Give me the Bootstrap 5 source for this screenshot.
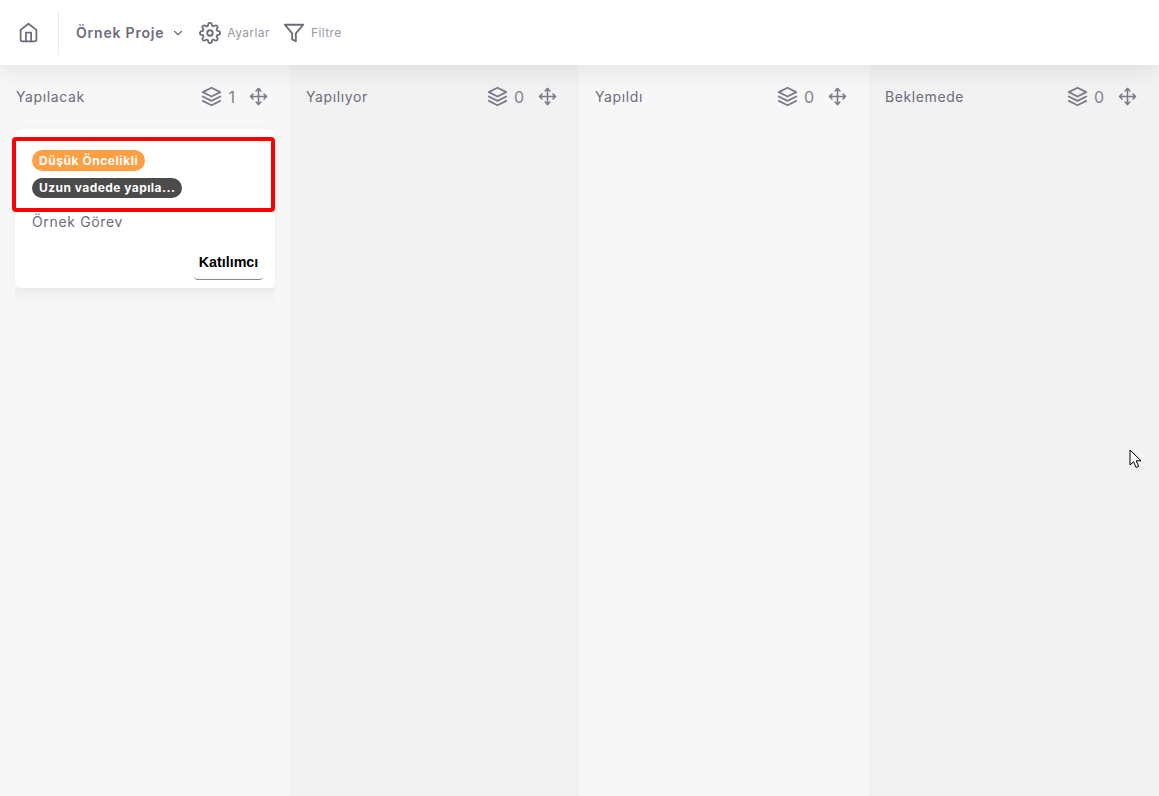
<!DOCTYPE html>
<html lang="tr">
<head>
    <meta charset="UTF-8">
    <title>Örnek Proje</title>
    <link href="https://cdn.jsdelivr.net/npm/bootstrap@5.3.0/dist/css/bootstrap.min.css" rel="stylesheet">
    <style>
        html, body {
            height: 100%;
        }

        body {
            font-family: Inter, "Noto Sans", sans-serif;
            color: #6e6b7b;
            background: #f8f8f8;
            overflow: hidden;
            position: relative;
        }

        .top-bar {
            height: 65px;
            background: #fff;
            box-shadow: 0 4px 24px rgba(34, 41, 47, 0.1);
            position: relative;
            z-index: 2;
            padding-left: 18px;
        }

        .home-link {
            width: 41px;
            height: 44px;
            border-right: 1px solid #ebe9f1;
            margin-right: 17px;
        }

        .project-name {
            font-size: 14px;
            font-weight: 600;
            letter-spacing: .8px;
            color: #6e6b7b;
        }

        .bar-link {
            font-size: 12px;
            color: #9a98a5;
            letter-spacing: .4px;
        }

        .chevron-ic {
            margin-left: 7px;
        }

        .gear-ic {
            margin-left: 14px;
        }

        .filter-ic {
            margin-left: 13px;
        }

        .ic-label {
            margin-left: 6px;
        }

        .board {
            display: grid;
            grid-template-columns: 290px 289px 290px 290px;
            height: 731px;
        }

        .board-col {
            background: #f7f7f7;
            padding: 0 15px;
        }

        .board-col.shaded {
            background: #f2f2f2;
        }

        .col-head {
            height: 64px;
            padding-left: 1px;
            padding-right: 7px;
            padding-bottom: 1px;
            font-size: 14px;
            letter-spacing: .6px;
        }

        .col-head svg {
            color: #7c7a87;
        }

        .col-count {
            margin: 0 14px 0 6px;
            font-size: 16px;
            color: #85828f;
            letter-spacing: 0;
        }

        .task-card {
            height: 159px;
            background: #fff;
            border-radius: 7px;
            box-shadow: 0 1px 10px rgba(34, 41, 47, 0.04);
            padding: 21px 12px 8px 17px;
            position: relative;
        }

        .task-card::after {
            content: "";
            position: absolute;
            left: 0;
            right: 0;
            top: 100%;
            height: 18px;
            background: linear-gradient(rgba(34, 41, 47, 0.04), rgba(34, 41, 47, 0));
        }

        .tag {
            display: table;
            font-size: 12px;
            font-weight: 700;
            line-height: 20px;
            color: #fff;
            border-radius: 10.5px;
            padding: 0 7px;
            letter-spacing: .45px;
            margin-bottom: 8px;
        }

        .tag-low {
            background: #ff9f43;
            line-height: 21px;
            letter-spacing: .55px;
            margin-bottom: 7px;
        }

        .tag-long {
            background: #4b4b4b;
        }

        .task-name {
            font-size: 14px;
            line-height: 20px;
            margin-top: 14px;
            letter-spacing: .65px;
        }

        .people-btn {
            width: 69px;
            height: 34px;
            margin-top: 14px;
            font-family: "Liberation Sans", Arial, sans-serif;
            font-size: 14.3px;
            font-weight: 700;
            color: #000;
            text-align: center;
            line-height: 32px;
            border-bottom: 1px solid #8a8a8a;
            border-radius: 0 0 4px 4px;
        }

        .red-mark {
            position: absolute;
            left: 12px;
            top: 137px;
            width: 263px;
            height: 75px;
            border: 4px solid #f00;
            border-radius: 4px;
            z-index: 3;
        }

        .mouse-arrow {
            position: absolute;
            left: 1129px;
            top: 449px;
            z-index: 3;
        }
    </style>
</head>
<body>
    <svg width="0" height="0" class="position-absolute">
        <symbol id="ic-layers" viewBox="0 0 24 24" fill="none" stroke="currentColor" stroke-width="2" stroke-linecap="round" stroke-linejoin="round">
            <polygon points="12 2 2 7 12 12 22 7 12 2"></polygon>
            <polyline points="2 17 12 22 22 17"></polyline>
            <polyline points="2 12 12 17 22 12"></polyline>
        </symbol>
        <symbol id="ic-move" viewBox="0 0 24 24" fill="none" stroke="currentColor" stroke-width="2" stroke-linecap="round" stroke-linejoin="round">
            <polyline points="5 9 2 12 5 15"></polyline>
            <polyline points="9 5 12 2 15 5"></polyline>
            <polyline points="15 19 12 22 9 19"></polyline>
            <polyline points="19 9 22 12 19 15"></polyline>
            <line x1="2" y1="12" x2="22" y2="12"></line>
            <line x1="12" y1="2" x2="12" y2="22"></line>
        </symbol>
    </svg>

    <nav class="top-bar d-flex align-items-center">
        <div class="home-link d-flex align-items-center">
            <svg width="21" height="21" viewBox="0 0 24 24" fill="none" stroke="#6e6b7b" stroke-width="2" stroke-linecap="round" stroke-linejoin="round">
                <path d="M3 9l9-7 9 7v11a2 2 0 0 1-2 2H5a2 2 0 0 1-2-2z"></path>
                <polyline points="9 22 9 12 15 12 15 22"></polyline>
            </svg>
        </div>
        <span class="project-name">Örnek Proje</span>
        <svg class="chevron-ic" width="14" height="14" viewBox="0 0 24 24" fill="none" stroke="#6e6b7b" stroke-width="2" stroke-linecap="round" stroke-linejoin="round">
            <polyline points="6 9 12 15 18 9"></polyline>
        </svg>
        <svg class="gear-ic" width="22" height="22" viewBox="0 0 24 24" fill="none" stroke="#6e6b7b" stroke-width="2" stroke-linecap="round" stroke-linejoin="round">
            <circle cx="12" cy="12" r="3"></circle>
            <path d="M19.4 15a1.65 1.65 0 0 0 .33 1.82l.06.06a2 2 0 0 1 0 2.83 2 2 0 0 1-2.83 0l-.06-.06a1.65 1.65 0 0 0-1.82-.33 1.65 1.65 0 0 0-1 1.51V21a2 2 0 0 1-2 2 2 2 0 0 1-2-2v-.09A1.65 1.65 0 0 0 9 19.4a1.65 1.65 0 0 0-1.82.33l-.06.06a2 2 0 0 1-2.83 0 2 2 0 0 1 0-2.83l.06-.06a1.65 1.65 0 0 0 .33-1.82 1.65 1.65 0 0 0-1.51-1H3a2 2 0 0 1-2-2 2 2 0 0 1 2-2h.09A1.65 1.65 0 0 0 4.6 9a1.65 1.65 0 0 0-.33-1.82l-.06-.06a2 2 0 0 1 0-2.83 2 2 0 0 1 2.83 0l.06.06a1.65 1.65 0 0 0 1.82.33H9a1.65 1.65 0 0 0 1-1.51V3a2 2 0 0 1 2-2 2 2 0 0 1 2 2v.09a1.65 1.65 0 0 0 1 1.51 1.65 1.65 0 0 0 1.82-.33l.06-.06a2 2 0 0 1 2.83 0 2 2 0 0 1 0 2.83l-.06.06a1.65 1.65 0 0 0-.33 1.82V9a1.65 1.65 0 0 0 1.51 1H21a2 2 0 0 1 2 2 2 2 0 0 1-2 2h-.09a1.65 1.65 0 0 0-1.51 1z"></path>
        </svg>
        <span class="bar-link ic-label">Ayarlar</span>
        <svg class="filter-ic" width="22" height="22" viewBox="0 0 24 24" fill="none" stroke="#6e6b7b" stroke-width="2" stroke-linecap="round" stroke-linejoin="round">
            <polygon points="22 3 2 3 10 12.46 10 19 14 21 14 12.46 22 3"></polygon>
        </svg>
        <span class="bar-link ic-label">Filtre</span>
    </nav>

    <main class="board">
        <section class="board-col">
            <div class="col-head d-flex align-items-center">
                <span class="flex-grow-1">Yapılacak</span>
                <svg width="21" height="21"><use href="#ic-layers"></use></svg>
                <span class="col-count">1</span>
                <svg width="19" height="19"><use href="#ic-move"></use></svg>
            </div>
            <div class="task-card">
                <span class="tag tag-low">Düşük Öncelikli</span>
                <span class="tag tag-long">Uzun vadede yapıla...</span>
                <div class="task-name">Örnek Görev</div>
                <div class="d-flex justify-content-end">
                    <div class="people-btn">Katılımcı</div>
                </div>
            </div>
        </section>
        <section class="board-col shaded">
            <div class="col-head d-flex align-items-center">
                <span class="flex-grow-1">Yapılıyor</span>
                <svg width="21" height="21"><use href="#ic-layers"></use></svg>
                <span class="col-count">0</span>
                <svg width="19" height="19"><use href="#ic-move"></use></svg>
            </div>
        </section>
        <section class="board-col">
            <div class="col-head d-flex align-items-center">
                <span class="flex-grow-1">Yapıldı</span>
                <svg width="21" height="21"><use href="#ic-layers"></use></svg>
                <span class="col-count">0</span>
                <svg width="19" height="19"><use href="#ic-move"></use></svg>
            </div>
        </section>
        <section class="board-col shaded">
            <div class="col-head d-flex align-items-center">
                <span class="flex-grow-1">Beklemede</span>
                <svg width="21" height="21"><use href="#ic-layers"></use></svg>
                <span class="col-count">0</span>
                <svg width="19" height="19"><use href="#ic-move"></use></svg>
            </div>
        </section>
    </main>

    <div class="red-mark"></div>
    <svg class="mouse-arrow" width="14" height="20" viewBox="0 0 14 20">
        <path d="M1 1v15l3.6-3.3 2.5 5.8 2.6-1.1-2.5-5.6H12z" fill="#fff" stroke="#000" stroke-width="1"></path>
    </svg>
</body>
</html>
